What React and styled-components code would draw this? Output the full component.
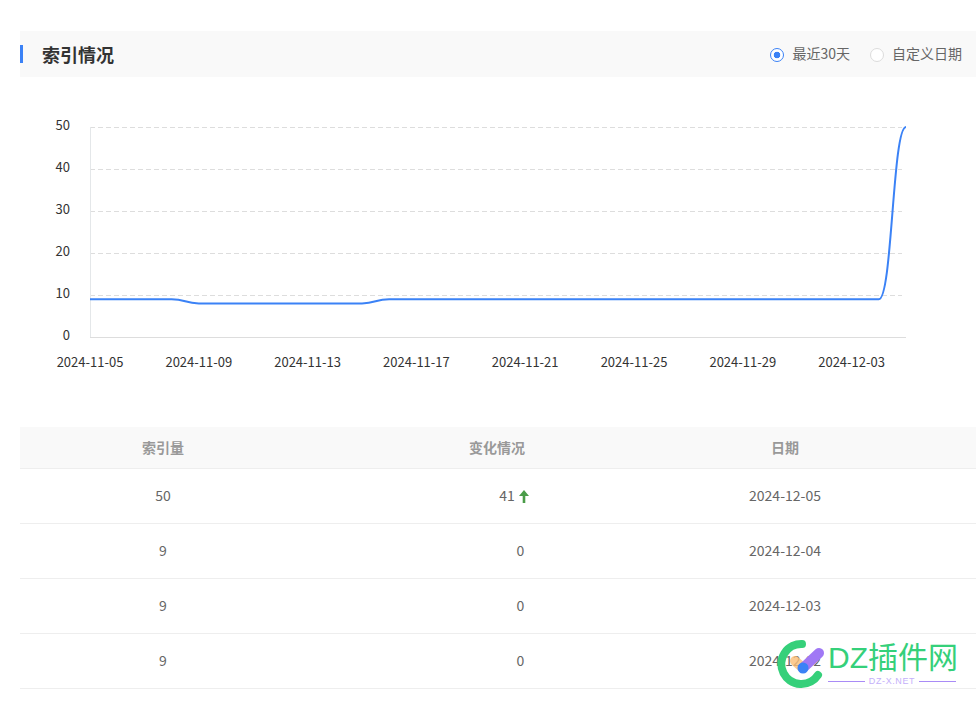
import React from "react";
import styled, { createGlobalStyle } from "styled-components";

const Global = createGlobalStyle`
  html, body { margin: 0; padding: 0; background: #fff; }
  body { font-family: "Noto Sans CJK SC", "Open Sans", sans-serif; color: #333; overflow: hidden; }
`;

const Page = styled.div`
  position: relative;
  width: 976px;
  height: 704px;
  overflow: hidden;
  padding: 31px 0 0 20px;
  box-sizing: border-box;
`;

const Header = styled.header`
  display: flex;
  align-items: center;
  justify-content: space-between;
  height: 46px;
  background: #f9f9f9;
  padding-right: 14px;
`;

const Title = styled.h2`
  margin: 0;
  height: 18px;
  border-left: 3px solid #3b82f6;
  padding-left: 19px;
  font-size: 18px;
  line-height: 18px;
  font-weight: 700;
  color: #333;
`;

const RadioGroup = styled.div`
  display: flex;
  align-items: center;
  gap: 20px;
`;

const RadioLabel = styled.label`
  display: flex;
  align-items: center;
  gap: 8px;
  font-size: 14px;
  line-height: 20px;
  color: #666;
`;

const RadioText = styled.span`
  margin-top: -2px;
`;

const RadioDot = styled.span`
  box-sizing: border-box;
  width: 14px;
  height: 14px;
  margin-top: 1px;
  border-radius: 50%;
  border: 1px solid ${(p) => (p.$on ? "#3b82f6" : "#dcdcdc")};
  background: ${(p) => (p.$on ? "radial-gradient(circle, #3b82f6 0 3px, #fff 3.6px)" : "#fff")};
`;

const ChartWrap = styled.div`
  margin: 23px 0 0 -20px;
  height: 327px;
`;

const ChartSvg = styled.svg`
  display: block;
  width: 976px;
  height: 303px;
  text {
    font-family: "Noto Sans CJK SC", "Open Sans", sans-serif;
    font-size: 13px;
    fill: #333;
  }
`;

const Table = styled.div`
  width: 956px;
`;

const Row = styled.div`
  display: grid;
  grid-template-columns: 286px 382px 194px 1fr;
  align-items: center;
  height: ${(p) => (p.$head ? "41px" : "54px")};
  background: ${(p) => (p.$head ? "#f9f9f9" : "#fff")};
  border-bottom: 1px solid #eeeeee;
  font-size: 14px;
  color: ${(p) => (p.$head ? "#999" : "#666")};
  font-weight: ${(p) => (p.$head ? 700 : 400)};
`;

const Cell = styled.div`
  text-align: center;
  line-height: 20px;
  margin-top: -2px;
  padding-left: ${(p) => p.$indent || 0}px;
`;

const Arrow = styled.svg`
  width: 10px;
  height: 13px;
  margin-left: 4px;
  vertical-align: -2px;
`;

const Watermark = styled.div`
  position: absolute;
  left: 775px;
  top: 638px;
  display: flex;
  align-items: flex-start;
  gap: 3px;
`;

const WmText = styled.div`
  display: flex;
  flex-direction: column;
  width: 128px;
  padding-top: 1px;
`;

const WmName = styled.div`
  font-family: "Liberation Sans", "Noto Sans CJK SC", sans-serif;
  font-size: 30px;
  line-height: 38px;
  color: #35d07a;
  white-space: nowrap;
`;

const WmSub = styled.div`
  display: flex;
  align-items: center;
  gap: 4px;
  font-family: "Liberation Sans", sans-serif;
  font-size: 9px;
  line-height: 6px;
  margin-top: 1px;
  letter-spacing: 0.6px;
  color: #c4b0fa;
  &::before, &::after {
    content: "";
    flex: 1;
    height: 1px;
    background: #a98bf6;
  }
`;

const ticks = [50, 40, 30, 20, 10, 0];
const dates = ["2024-11-05", "2024-11-09", "2024-11-13", "2024-11-17", "2024-11-21", "2024-11-25", "2024-11-29", "2024-12-03"];
const rows = [
  { count: 50, delta: 41, date: "2024-12-05", up: true },
  { count: 9, delta: 0, date: "2024-12-04" },
  { count: 9, delta: 0, date: "2024-12-03" },
  { count: 9, delta: 0, date: "2024-12-02" },
];
const originY = 100;
const X0 = 90;
const STEP = 27.2;

function Chart() {
  const y = (v) => 337 - originY - v * 4.2;
  const x = (d) => X0 + d * STEP;
  const vals = [];
  for (let i = 0; i <= 30; i++) vals.push(i === 30 ? 50 : i >= 4 && i <= 10 ? 8 : 9);
  let d = `M${x(0)} ${y(vals[0])}`;
  for (let i = 1; i <= 30; i++) {
    const mx = (x(i - 1) + x(i)) / 2;
    d += ` C${mx} ${y(vals[i - 1])} ${mx} ${y(vals[i])} ${x(i)} ${y(vals[i])}`;
  }
  return (
    <ChartSvg viewBox="0 0 976 303">
      {ticks.filter((t) => t > 0).map((t) => (
        <line key={t} x1="90" x2="902" y1={Math.floor(y(t)) + 0.5} y2={Math.floor(y(t)) + 0.5} stroke="#dddddd" strokeDasharray="5 3" />
      ))}
      <line x1="90.5" x2="90.5" y1="27" y2="237" stroke="#e4e7e9" />
      <line x1="90" x2="906" y1="237.5" y2="237.5" stroke="#dddddd" />
      {ticks.map((t) => (
        <text key={t} x="70" y={y(t) + 2.8} textAnchor="end">{t}</text>
      ))}
      {dates.map((t, i) => (
        <text key={t} x={x(i * 4)} y="267" textAnchor="middle">{t}</text>
      ))}
      <path d={d} fill="none" stroke="#3b82f6" strokeWidth="2" />
    </ChartSvg>
  );
}

export default function App() {
  return (
    <Page>
      <Global />
      <Header>
        <Title>索引情况</Title>
        <RadioGroup>
          <RadioLabel><RadioDot $on /><RadioText>最近30天</RadioText></RadioLabel>
          <RadioLabel><RadioDot /><RadioText>自定义日期</RadioText></RadioLabel>
        </RadioGroup>
      </Header>
      <ChartWrap><Chart /></ChartWrap>
      <Table>
        <Row $head>
          <Cell>索引量</Cell>
          <Cell>变化情况</Cell>
          <Cell>日期</Cell>
        </Row>
        {rows.map((r) => (
          <Row key={r.date}>
            <Cell>{r.count}</Cell>
            <Cell $indent={r.up ? 34 : 47}>
              {r.delta}
              {r.up && (
                <Arrow viewBox="0 0 10 13">
                  <path d="M5 0 L10 6 H6.3 V13 H3.7 V6 H0 Z" fill="#4a9c48" />
                </Arrow>
              )}
            </Cell>
            <Cell>{r.date}</Cell>
          </Row>
        ))}
      </Table>
      <Watermark>
        <svg width="50" height="52" viewBox="0 0 50 52">
          <path d="M27 6 A20 20 0 1 0 43 37" fill="none" stroke="#35d07a" strokeWidth="8" strokeLinecap="round" />
          <line x1="20" y1="23" x2="28" y2="30" stroke="#fbbf77" strokeWidth="10" strokeLinecap="round" opacity="0.8" />
          <line x1="28" y1="30" x2="44" y2="15" stroke="#a078f5" strokeWidth="10" strokeLinecap="round" />
          <circle cx="28" cy="30" r="5.5" fill="#3b82f6" />
        </svg>
        <WmText>
          <WmName>DZ插件网</WmName>
          <WmSub>DZ-X.NET</WmSub>
        </WmText>
      </Watermark>
    </Page>
  );
}
